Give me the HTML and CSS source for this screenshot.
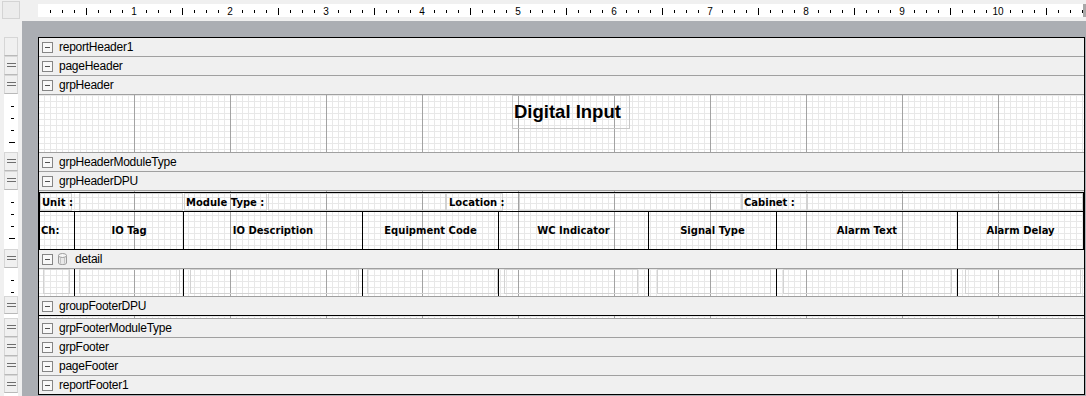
FILE: index.html
```html
<!DOCTYPE html>
<html lang="en">

<head>
    <meta charset="UTF-8">
    <meta name="viewport" content="width=device-width, initial-scale=1.0">
    <title>Report Designer - Digital Input</title>
    <link rel="stylesheet" href="styles.css">
</head>

<body>
    <div class="designer">
        <div class="corner"><div class="corner-box"></div></div>

        <div class="hruler-wrap">
            <div class="hruler">
                <span>1</span><span>2</span><span>3</span><span>4</span><span>5</span>
                <span>6</span><span>7</span><span>8</span><span>9</span><span>10</span>
            </div>
            <div class="hruler-end"></div>
        </div>

        <!-- vertical ruler, one item per report section -->
        <div class="vruler">
            <div class="vstrip">
                <div class="vbox"></div>
                <div class="vbox grip"></div>
                <div class="vbox grip"></div>
                <div class="vtick h-gh"></div>
                <div class="vbox grip"></div>
                <div class="vbox grip"></div>
                <div class="vtick h-dpu"></div>
                <div class="vbox grip"></div>
                <div class="vtick h-det"></div>
                <div class="vbox grip short"></div>
                <div class="vtick h-gfd"></div>
                <div class="vbox grip"></div>
                <div class="vbox grip"></div>
                <div class="vbox grip"></div>
                <div class="vbox grip short"></div>
            </div>
        </div>

        <div class="canvas">
            <div class="report">
                <div class="band"><span class="toggle"></span><span>reportHeader1</span></div>
                <div class="band"><span class="toggle"></span><span>pageHeader</span></div>
                <div class="band"><span class="toggle"></span><span>grpHeader</span></div>
                <div class="section grid gh-body">
                    <div class="title-box">Digital Input</div>
                </div>
                <div class="band"><span class="toggle"></span><span>grpHeaderModuleType</span></div>
                <div class="band"><span class="toggle"></span><span>grpHeaderDPU</span></div>

                <div class="section grid dpu-body">
                    <div class="dpu">
                        <div class="dpu-top">
                            <div class="fbox lbl w-unit">Unit :</div>
                            <div class="fbox w-unitval"></div>
                            <div class="fbox lbl w-mod">Module Type :</div>
                            <div class="fbox w-modval"></div>
                            <div class="fbox lbl w-loc">Location :</div>
                            <div class="fbox w-locval"></div>
                            <div class="fbox lbl w-cab">Cabinet :</div>
                            <div class="fbox w-cabval"></div>
                        </div>
                        <div class="cols dpu-head">
                            <div class="col c1 left">Ch:</div>
                            <div class="col c2">IO Tag</div>
                            <div class="col c3">IO Description</div>
                            <div class="col c4">Equipment Code</div>
                            <div class="col c5">WC Indicator</div>
                            <div class="col c6">Signal Type</div>
                            <div class="col c7">Alarm Text</div>
                            <div class="col c8">Alarm Delay</div>
                        </div>
                    </div>
                </div>

                <div class="band">
                    <span class="toggle"></span>
                    <svg class="db" width="11" height="14" viewBox="0 0 11 14">
                        <path d="M1.5 3.5 V11 C1.5 13 9.5 13 9.5 11 V3.5" fill="#e9e9e9" stroke="#9c9c9c"/>
                        <ellipse cx="5.5" cy="3.5" rx="4" ry="2" fill="#f6f6f6" stroke="#9c9c9c"/>
                        <path d="M3.5 6 V11.5 M7.5 6 V11.5" stroke="#c4c4c4"/>
                    </svg>
                    <span>detail</span>
                </div>
                <div class="section grid det-body">
                    <div class="cols det-row">
                        <div class="col c1"><div class="dbox"></div></div>
                        <div class="col c2"><div class="dbox"></div></div>
                        <div class="col c3"><div class="dbox"></div></div>
                        <div class="col c4"><div class="dbox"></div></div>
                        <div class="col c5"><div class="dbox"></div></div>
                        <div class="col c6"><div class="dbox"></div></div>
                        <div class="col c7"><div class="dbox"></div></div>
                        <div class="col c8"><div class="dbox"></div></div>
                    </div>
                </div>

                <div class="band short"><span class="toggle"></span><span>groupFooterDPU</span></div>
                <div class="section grid gfd-body"></div>
                <div class="band"><span class="toggle"></span><span>grpFooterModuleType</span></div>
                <div class="band"><span class="toggle"></span><span>grpFooter</span></div>
                <div class="band"><span class="toggle"></span><span>pageFooter</span></div>
                <div class="band short"><span class="toggle"></span><span>reportFooter1</span></div>
            </div>
        </div>
    </div>
</body>
</html>
```

FILE: styles.css
```css
/* Report designer surface */
body {
    margin: 0;
    background-color: #f0f0f0;
    font-family: "Liberation Sans", Arial, sans-serif;
    color: #000;
    overflow: hidden;
}
.designer {
    display: grid;
    grid-template-columns: 22px 1064px;
    grid-template-rows: 21px 375px;
    width: 1086px;
    height: 396px;
}

/* top-left corner + horizontal ruler */
.corner-box {
    margin: 1px 0 0 2px;
    width: 18px;
    height: 18px;
    box-sizing: border-box;
    border: 1px solid #d4d4d4;
    background-color: #ececec;
}
.hruler-wrap {
    display: flex;
    padding: 4px 0 0 16px;
}
.hruler {
    width: 1045px;
    height: 13px;
    box-sizing: border-box;
    padding-left: 48px;
    display: flex;
    background-color: #fff;
    background-image:
        repeating-linear-gradient(to right, transparent 0 48px, #000 48px 49px, transparent 49px 96px),
        repeating-linear-gradient(to right,
            transparent 0 12px, #000 12px 13px, transparent 13px 24px, #000 24px 25px,
            transparent 25px 36px, #000 36px 37px, transparent 37px 60px, #000 60px 61px,
            transparent 61px 72px, #000 72px 73px, transparent 73px 84px, #000 84px 85px,
            transparent 85px 96px);
    background-size: 100% 7px, 100% 3px;
    background-position: 0 4px, 0 6px;
    background-repeat: no-repeat;
}
.hruler span {
    flex: 0 0 96px;
    text-align: center;
    font-size: 10px;
    line-height: 13px;
    padding-top: 1px;
}
.hruler-end {
    width: 3px;
    height: 13px;
    background-color: #a8a8a8;
}

/* vertical ruler */
.vruler {
    padding-top: 16px;
}
.vstrip {
    margin-left: 4px;
    width: 14px;
    height: 100%;
    background-color: #fff;
}
.vbox {
    height: 19px;
    box-sizing: border-box;
    border: 1px solid #d6d6d6;
    border-bottom-color: #b9b9b9;
    background-color: #f0f0f0;
    display: flex;
    justify-content: center;
}
.vbox.short {
    height: 18px;
}
.vbox.grip::after {
    content: "";
    width: 9px;
    height: 2px;
    margin-top: 6px;
    border-top: 1px solid #6e6e6e;
    border-bottom: 1px solid #6e6e6e;
}
.vtick {
    background-image:
        repeating-linear-gradient(to bottom, transparent 0 47px, #000 47px 48px),
        repeating-linear-gradient(to bottom, transparent 0 11px, #000 11px 12px);
    background-size: 6px 100%, 3px 100%;
    background-position: 5px 1px, 7px 1px;
    background-repeat: no-repeat;
}
.h-gh { height: 58px; }
.h-dpu { height: 59px; }
.h-det { height: 28px; }
.h-gfd { height: 4px; }

/* grey canvas with the report page */
.canvas {
    background-color: #abaeb3;
    padding: 16px 0 0 16px;
    overflow: hidden;
}
.report {
    width: 1047px;
    box-sizing: border-box;
    border: 1px solid #000;
    background-color: #f0f0f0;
}
.band {
    height: 19px;
    box-sizing: border-box;
    border-bottom: 1px solid #a0a0a0;
    display: flex;
    align-items: center;
    gap: 6px;
    padding-left: 3px;
    font-size: 12px;
    letter-spacing: -0.25px;
}
.band.short {
    height: 18px;
    border-bottom: none;
}
.toggle {
    width: 11px;
    height: 11px;
    box-sizing: border-box;
    border: 1px solid #858585;
    background-color: #f8f8f8;
    display: flex;
    align-items: center;
    justify-content: center;
}
.toggle::after {
    content: "";
    width: 5px;
    height: 1px;
    background-color: #505050;
}
.db {
    margin-left: -2px;
    margin-right: 1px;
}

/* design grid: 1/16" minor, 1" major */
.grid {
    background-color: #fff;
    background-image:
        linear-gradient(to right, #a3a3a3 1px, transparent 1px),
        linear-gradient(to right, #e8e8e8 1px, transparent 1px),
        linear-gradient(to bottom, #e8e8e8 1px, transparent 1px);
    background-size: 96px 100%, 6px 100%, 100% 6px;
    background-position: -1px 0, -1px 0, 0 0;
}
.section {
    box-sizing: border-box;
}
.gh-body {
    height: 58px;
    border-bottom: 1px solid #a0a0a0;
}
.title-box {
    margin-left: 473px;
    width: 118px;
    height: 34px;
    box-sizing: border-box;
    border: 1px solid #c8c8c8;
    padding: 5px 0 0 1px;
    font-size: 18.5px;
    font-weight: bold;
    line-height: 21px;
    white-space: nowrap;
}

/* DPU header table */
.dpu-body {
    height: 59px;
    padding-top: 1px;
}
.dpu {
    border: 1px solid #000;
    font-family: "DejaVu Sans", Verdana, sans-serif;
    font-size: 10px;
    font-weight: bold;
}
.dpu-top {
    height: 18px;
    display: flex;
    border-bottom: 1px solid #000;
}
.fbox {
    box-sizing: border-box;
    border: 1px solid #d2d2d2;
    display: flex;
    align-items: center;
    padding: 1px 0 0 1px;
    white-space: nowrap;
}
.w-unit { width: 32px; }
.w-unitval { width: 104px; margin-left: 7px; }
.w-mod { width: 83px; margin-left: 1px; }
.w-modval { width: 178px; margin-left: 1px; }
.w-loc { width: 57px; padding-left: 2px; }
.w-locval { width: 223px; margin-left: 16px; }
.w-cab { width: 65px; }
.w-cabval { flex: 1; }

.cols {
    display: flex;
}
.col {
    box-sizing: border-box;
    border-right: 1px solid #000;
}
.c1 { width: 35px; }
.c2 { width: 109px; }
.c3 { width: 179px; }
.c4 { width: 136px; }
.c5 { width: 150px; }
.c6 { width: 128px; }
.c7 { width: 181px; }
.c8 { width: 125px; border-right: none; }

.dpu-head {
    height: 37px;
}
.dpu-head .col {
    display: flex;
    align-items: center;
    justify-content: center;
    white-space: nowrap;
}
.dpu-head .col.left {
    justify-content: flex-start;
    padding-left: 1px;
}

/* detail row */
.det-body {
    height: 28px;
    border-bottom: 1px solid #a0a0a0;
    padding: 0 1px;
}
.det-row {
    height: 27px;
}
.det-row .col {
    display: flex;
}
.dbox {
    flex: 1;
    height: 25px;
    box-sizing: border-box;
    border: 1px solid #d2d2d2;
}
.c1 .dbox { margin: 0 4px 0 3px; }
.c2 .dbox { margin: 0 3px 0 4px; }
.c3 .dbox { margin: 0 3px 0 6px; }
.c4 .dbox { margin: 0 0 0 4px; }
.c5 .dbox { margin: 0 10px 0 5px; }
.c6 .dbox { margin: 0 5px 0 8px; }
.c7 .dbox { margin: 0 5px 0 6px; }
.c8 .dbox { margin: 0 2px 0 7px; }

.gfd-body {
    height: 4px;
    border-top: 1px solid #000;
    border-bottom: 1px solid #a0a0a0;
}
```
